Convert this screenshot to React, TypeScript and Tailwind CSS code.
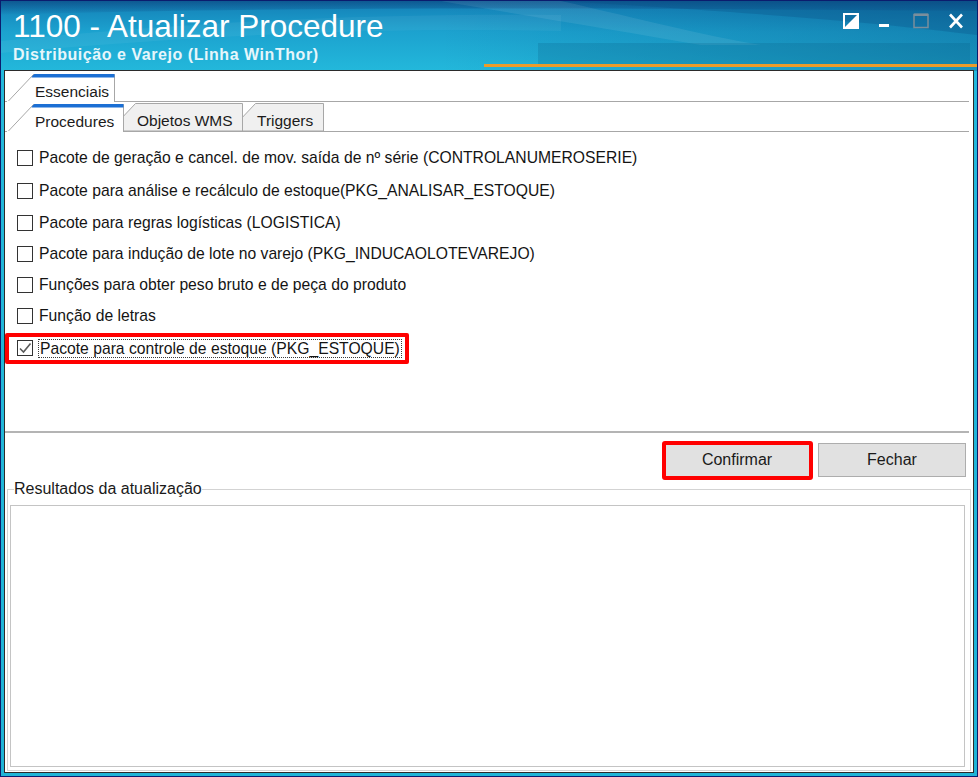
import React from "react";

type Row = { label: string; checked?: boolean; h: string };

const rows: Row[] = [
  { label: "Pacote de geração e cancel. de mov. saída de nº série (CONTROLANUMEROSERIE)", h: "h-[32px]" },
  { label: "Pacote para análise e recálculo de estoque(PKG_ANALISAR_ESTOQUE)", h: "h-[33px]" },
  { label: "Pacote para regras logísticas (LOGISTICA)", h: "h-[31px]" },
  { label: "Pacote para indução de lote no varejo (PKG_INDUCAOLOTEVAREJO)", h: "h-[31px]" },
  { label: "Funções para obter peso bruto e de peça do produto", h: "h-[31px]" },
  { label: "Função de letras", h: "h-[32px]" },
  { label: "Pacote para controle de estoque (PKG_ESTOQUE)", checked: true, h: "h-[32px]" },
];

function WindowArt() {
  return (
    <svg
      className="absolute inset-0 w-full h-full"
      viewBox="0 0 976 775"
      preserveAspectRatio="none"
    >
      <defs>
        <linearGradient id="bar" x1="0" y1="0" x2="0" y2="1">
          <stop offset="0" stopColor="#147fb6" />
          <stop offset="0.04" stopColor="#1ca2cf" />
          <stop offset="0.09" stopColor="#23b8db" />
          <stop offset="1" stopColor="#1fb4d6" />
        </linearGradient>
        <linearGradient id="shade" x1="0" y1="0" x2="1" y2="0">
          <stop offset="0" stopColor="#003c70" stopOpacity="0" />
          <stop offset="0.45" stopColor="#003c70" stopOpacity="0" />
          <stop offset="1" stopColor="#003c70" stopOpacity="0.3" />
        </linearGradient>
        <linearGradient id="topdark" x1="0" y1="0" x2="0" y2="1">
          <stop offset="0" stopColor="#0a3f7a" stopOpacity="0.6" />
          <stop offset="1" stopColor="#0a3f7a" stopOpacity="0" />
        </linearGradient>
      </defs>
      <rect x="0" y="0" width="976" height="775" fill="url(#bar)" />
      <rect x="0" y="0" width="976" height="70" fill="url(#shade)" />
      <path d="M0 0 H976 V10 C700 8 300 4 0 14 Z" fill="url(#topdark)" />
      <path d="M560 0 H976 V34 C880 22 760 12 560 0 Z" fill="#0a4f86" opacity="0.3" />
      <path d="M440 0 L560 0 C640 18 700 34 760 44 L700 44 C620 30 520 14 440 0 Z" fill="#ffffff" opacity="0.08" />
      <path d="M0 40 C200 20 380 12 560 14 L560 30 C380 26 200 34 0 52 Z" fill="#ffffff" opacity="0.05" />
      <rect x="537" y="42" width="432" height="21" fill="#04557f" opacity="0.2" />
      <rect x="483" y="63" width="493" height="3" fill="#eb9c2a" />
    </svg>
  );
}

function Controls() {
  return (
    <div className="flex gap-[19px] mt-[12px] mr-[13px]">
      <svg width="16" height="16" viewBox="0 0 16 16">
        <rect x="1" y="1" width="14" height="14" fill="none" stroke="#ffffff" strokeWidth="2" />
        <path d="M15 1 L15 15 L1 15 Z" fill="#ffffff" />
      </svg>
      <svg width="16" height="16" viewBox="0 0 16 16">
        <rect x="1" y="11" width="10" height="3" fill="#ffffff" />
      </svg>
      <svg width="16" height="16" viewBox="0 0 16 16">
        <rect x="1" y="1.5" width="14" height="13" fill="none" stroke="#7a8e9c" strokeWidth="1.5" />
        <rect x="1" y="0.5" width="14" height="2.5" fill="#7a8e9c" />
      </svg>
      <svg width="16" height="16" viewBox="0 0 16 16">
        <path d="M2 1.5 L14 14.5 M14 1.5 L2 14.5" stroke="#ffffff" strokeWidth="2.6" />
      </svg>
    </div>
  );
}

function Tab({
  label,
  width,
  active,
  cls,
}: {
  label: string;
  width: number;
  active?: boolean;
  cls: string;
}) {
  const h = 28;
  return (
    <div className={`relative h-[28px] ${cls}`}>
      <svg className="absolute inset-0" width={width} height={h}>
        <polygon
          points={`0.5,${h} 26.5,0.5 ${width - 0.5},0.5 ${width - 0.5},${h}`}
          fill={active ? "#ffffff" : "#f0f0f0"}
          stroke="#a7a7a7"
          strokeWidth="1"
        />
        {active && (
          <path
            d={`M24.5 3.5 Q26 0 28 0 L${width - 0.5} 0 L${width - 0.5} 3.5 Z`}
            fill="#1b6fd4"
          />
        )}
        {active && <rect x="0" y={h - 1} width={width - 1} height="1" fill="#ffffff" />}
      </svg>
      <span className="relative block pt-[9px] pl-[28px] text-[15.5px] leading-[18px] text-[#1b1b1b]">
        {label}
      </span>
    </div>
  );
}

function Check({ checked }: { checked?: boolean }) {
  return (
    <span className="w-[16px] h-[16px] shrink-0 border border-[#333333] bg-white flex items-center justify-center">
      {checked && (
        <svg width="14" height="14" viewBox="0 0 14 14">
          <path d="M2 7.5 L5.5 11 L12.5 2.5" fill="none" stroke="#5a5a5a" strokeWidth="1.6" />
        </svg>
      )}
    </span>
  );
}

export default function App() {
  return (
    <div className="w-[978px] h-[777px] bg-[#0b1c6e] p-[1px] font-['Liberation_Sans',Arial,sans-serif]">
      <div className="relative w-full h-full flex flex-col">
        <WindowArt />

        <header className="relative h-[69px] flex justify-between">
          <div className="pl-[12px] pt-[8px] text-white">
            <div className="text-[31.5px] leading-[34px]">1100 - Atualizar Procedure</div>
            <div className="mt-[3px] text-[16px] leading-[18px] font-bold tracking-[0.55px] text-[#e6f6fb]">
              Distribuição e Varejo (Linha WinThor)
            </div>
          </div>
          <Controls />
        </header>

        <main className="relative flex-1 ml-[3px] mr-[3px] mb-[3px] border border-[#2b2b2b] bg-white flex flex-col">
          {/* outer tab strip */}
          <div className="h-[31px] pt-[3px] pl-[2px] mr-[4px] border-b border-[#a7a7a7] flex items-end">
            <Tab label="Essenciais" width={108} active cls="w-[108px] -mb-px z-10" />
          </div>

          {/* inner tab strip */}
          <div className="h-[30px] pt-[2px] pl-[2px] mr-[4px] border-b border-[#a7a7a7] flex items-end">
            <Tab label="Procedures" width={117} active cls="w-[117px] -mb-px z-30" />
            <Tab label="Objetos WMS" width={134} cls="w-[134px] -ml-[15px] z-20" />
            <Tab label="Triggers" width={95} cls="w-[95px] -ml-[14px] z-10" />
          </div>

          {/* procedure list */}
          <div className="h-[299px] pt-[10px] flex flex-col">
            {rows.map((r) => (
              <div key={r.label} className={`relative flex items-center pl-[12px] gap-[6px] ${r.h}`}>
                <Check checked={r.checked} />
                {r.checked ? (
                  <span className="-ml-px px-px text-[15.7px] leading-[17px] text-[#141414] border border-dotted border-[#3a3a3a]">
                    {r.label}
                  </span>
                ) : (
                  <span className="text-[15.7px] leading-[18px] text-[#141414]">{r.label}</span>
                )}
                {r.checked && (
                  <span className="absolute left-0 top-[1px] w-[404px] h-[31px] border-[4px] border-[#ff0000] rounded-[2px]" />
                )}
              </div>
            ))}
          </div>

          <div className="h-[2px] mr-[4px] bg-[#b4b4b4]" />

          {/* actions */}
          <div className="h-[47px] pt-[10px] pr-[7px] flex justify-end gap-[7px]">
            <button className="relative w-[148px] h-[34px] bg-[#e1e1e1] border border-[#adadad] text-[16px] text-[#1a1a1a]">
              Confirmar
              <span className="absolute -left-[2px] -right-[3px] -top-[3px] -bottom-[4px] border-[4px] border-[#ff0000] rounded-[3px]" />
            </button>
            <button className="w-[148px] h-[34px] bg-[#e1e1e1] border border-[#adadad] text-[16px] text-[#1a1a1a]">
              Fechar
            </button>
          </div>

          {/* results group */}
          <fieldset className="flex-1 ml-[2px] mr-[2px] mb-px border border-[#d3d3d3] px-[2px] pb-[3px] flex flex-col">
            <legend className="ml-[4px] px-0 text-[16px] leading-[18px] text-[#1a1a1a]">
              Resultados da atualização
            </legend>
            <div className="flex-1 mt-[7px] mr-[3px] border border-[#c4c4c4] bg-white" />
          </fieldset>
        </main>
      </div>
    </div>
  );
}
